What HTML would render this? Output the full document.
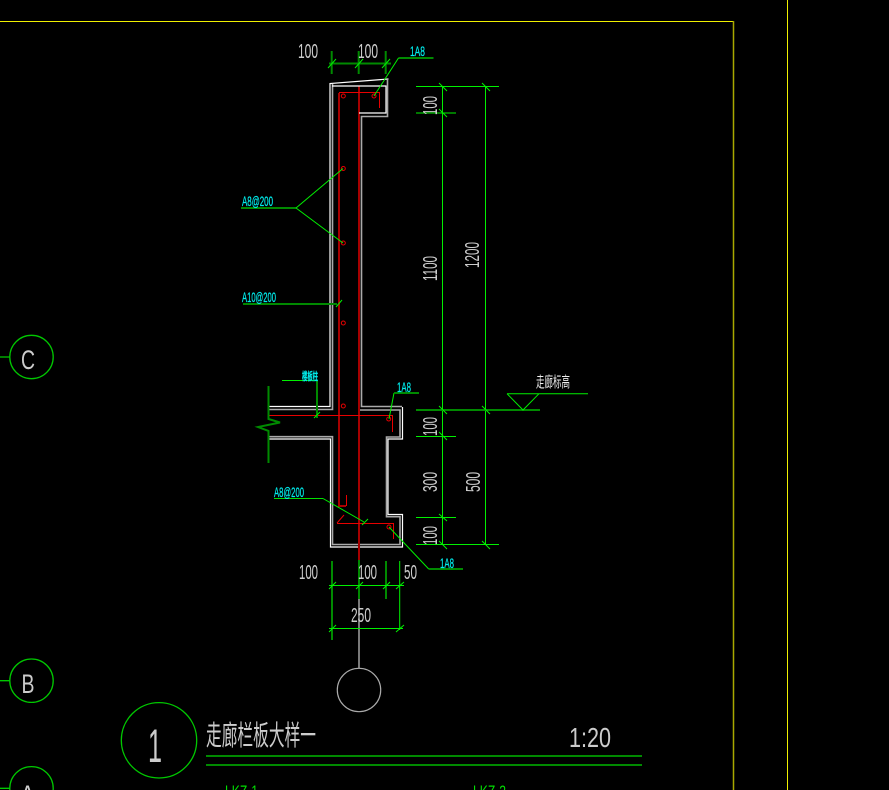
<!DOCTYPE html>
<html><head><meta charset="utf-8"><style>
html,body{margin:0;padding:0;background:#000;width:889px;height:790px;overflow:hidden}
svg{display:block}
text{font-family:"Liberation Sans","Noto Sans CJK SC",sans-serif}
.w{fill:#ccc}.c{fill:#0ee;stroke:#0ee;stroke-width:.25}.g{fill:#0d0}
.dk{stroke:#008a00;stroke-width:2;fill:none}
.br{stroke:#00e000;stroke-width:1;fill:none}
.t{stroke:#00f000;stroke-width:1;fill:none}
.wh{stroke:#fff;stroke-width:1.2;fill:none}
.gr{stroke:#aaa;stroke-width:1.6;fill:none}
.rd{stroke:#a80000;stroke-width:2;fill:none}
.rb{stroke:#e80000;stroke-width:1;fill:none}
.dot{stroke:#e80000;stroke-width:1;fill:none}
</style></head><body>
<svg width="889" height="790" viewBox="0 0 889 790" xmlns="http://www.w3.org/2000/svg">
<rect width="889" height="790" fill="#000"/>
<!-- frame -->
<path d="M0 21.5H733" stroke="#f0f000" stroke-width="1" fill="none"/>
<path d="M733.5 21V790" stroke="#a8a800" stroke-width="1.5" fill="none"/>
<path d="M787.5 0V790" stroke="#f0f000" stroke-width="1" fill="none"/>

<!-- axis bubbles -->
<g fill="none" stroke="#00c800" stroke-width="1.3">
<circle cx="31.5" cy="357" r="21.7"/><circle cx="31.5" cy="680.7" r="21.7"/><circle cx="31.5" cy="788.3" r="21.7"/>
<path d="M0 357H10M0 680.7H10M0 788.3H10"/>
</g>
<text class="w" x="21" y="369" font-size="27" textLength="14" lengthAdjust="spacingAndGlyphs">C</text>
<text class="w" x="21.500" y="693" font-size="27" textLength="13" lengthAdjust="spacingAndGlyphs">B</text>
<text class="w" x="20" y="804" font-size="27" textLength="15" lengthAdjust="spacingAndGlyphs">A</text>

<!-- rebar -->
<path class="rd" d="M339 93V506H346"/>
<path class="rb" d="M346.500 506V495"/>
<path class="rd" d="M359 86V560"/>
<path class="rb" d="M339 92.500H379.500V108M269 415.500H392.500V432M337 523.500H393.500V539M337 523L344 515"/>
<g class="dot">
<circle cx="343.300" cy="96" r="2"/><circle cx="374" cy="96" r="2"/><circle cx="343.300" cy="168.500" r="2"/><circle cx="343.300" cy="243" r="2"/><circle cx="343.300" cy="323" r="2"/><circle cx="343.300" cy="406" r="2"/><circle cx="388.700" cy="419" r="2"/><circle cx="389" cy="527" r="2"/>
</g>

<!-- concrete outline -->
<path class="gr" d="M332.500 84V409.500H269"/>
<path class="gr" d="M387.500 80V116.500H361.500V406.500H402"/>
<path class="gr" d="M269 436.700H332.500V544.500H400V516.700H386.500V437H400V410H360"/>
<path class="wh" d="M269 406.500H330V83.500L388.500 79"/>
<path class="wh" d="M332 86H386V113H359"/>
<path class="wh" d="M402.500 407V439H388V514.500H402.500V547H330.500V439H269"/>

<!-- centre line & symbol -->
<path d="M359 560V668" stroke="#999" stroke-width="1.6" fill="none"/>
<path class="rd" d="M359 540V562"/>
<circle cx="359" cy="690" r="21.700" fill="none" stroke="#aaa" stroke-width="1.200"/>

<!-- top dim -->
<path class="dk" d="M331.700 51V74M358.700 51V74M385.700 51V74M329 63.500H391"/>
<path class="t" d="M328 68L336 59M355 68L363 59M382 68L390 59"/>
<text class="w" x="298" y="58" font-size="20" textLength="20" lengthAdjust="spacingAndGlyphs">100</text>
<text class="w" x="358" y="58" font-size="20" textLength="20" lengthAdjust="spacingAndGlyphs">100</text>

<!-- leaders -->
<path class="t" d="M374 96L398.500 58"/><path class="dk" d="M398.500 58H433.500" stroke-width="1.500"/>
<text class="c" x="410" y="56" font-size="14" textLength="15" lengthAdjust="spacingAndGlyphs">1A8</text>
<path class="dk" d="M241 208H296" stroke-width="1.500"/>
<path class="t" d="M296 208L343 168.500M296 208L343 243"/>
<text class="c" x="242" y="206" font-size="14" textLength="31" lengthAdjust="spacingAndGlyphs">A8@200</text>
<path class="dk" d="M243 304H337"/>
<path class="t" d="M336 307L342 300"/>
<text class="c" x="242" y="302" font-size="14" textLength="34" lengthAdjust="spacingAndGlyphs">A10@200</text>

<!-- slab break / label -->
<path class="dk" d="M268.500 386V419L280 422.500L258 427L268.500 431V463" stroke-width="1.500"/>
<path class="t" d="M282 380.500H317"/><path class="dk" d="M317 380.500V418"/>
<path class="t" d="M314 418L320 412"/>
<text class="c" x="302" y="380" font-size="11" font-weight="bold" textLength="16" lengthAdjust="spacingAndGlyphs">楼板柱</text>
<path class="t" d="M389 419L394 393"/><path class="dk" d="M394 393H419"/>
<text class="c" x="397" y="392" font-size="14" textLength="14" lengthAdjust="spacingAndGlyphs">1A8</text>

<path class="br" d="M274 498.500H323"/><path class="t" d="M323 498.500L364 522M362 525L368 519"/>
<text class="c" x="274" y="497" font-size="14" textLength="30" lengthAdjust="spacingAndGlyphs">A8@200</text>
<path class="t" d="M389 527L428.700 569"/><path class="dk" d="M428.700 569H463" stroke-width="1.500"/>
<text class="c" x="440" y="568" font-size="14" textLength="14" lengthAdjust="spacingAndGlyphs">1A8</text>

<!-- right dim -->
<path class="t" d="M416 86.500H499M416 113H456M442.500 86V545M485.500 86V545M416 436.500H456M416 517.500H456M416 544.500H499"/>
<path class="dk" d="M416 410H540"/>
<path class="t" d="M439 83L447 91M482 83L490 91M439 109L447 117M439 406L447 414M482 406L490 414M439 432L447 440M439 514L447 521M439 541L447 549M482 541L490 549"/>
<path class="t" d="M507 393.700L523 410L539 393.700M507 393.700H588"/>
<text x="536" y="387" font-size="15" fill="#eee" textLength="34" lengthAdjust="spacingAndGlyphs">走廊标高</text>

<g class="w" font-size="20">
<text transform="translate(437,115) rotate(-90)" textLength="19" lengthAdjust="spacingAndGlyphs">100</text>
<text transform="translate(437,281) rotate(-90)" textLength="25" lengthAdjust="spacingAndGlyphs">1100</text>
<text transform="translate(479,268) rotate(-90)" textLength="26" lengthAdjust="spacingAndGlyphs">1200</text>
<text transform="translate(437,436) rotate(-90)" textLength="19" lengthAdjust="spacingAndGlyphs">100</text>
<text transform="translate(437,492) rotate(-90)" textLength="20" lengthAdjust="spacingAndGlyphs">300</text>
<text transform="translate(480,492) rotate(-90)" textLength="20" lengthAdjust="spacingAndGlyphs">500</text>
<text transform="translate(437,545) rotate(-90)" textLength="19" lengthAdjust="spacingAndGlyphs">100</text>
</g>

<!-- bottom dim -->
<path class="dk" d="M332 561V640M386 561V599"/>
<path class="dk" d="M359 560V599"/>
<path class="t" d="M399.700 561V630M329 585.500H404M329 628.500H403"/>
<path class="t" d="M329 589L336 582M356 589L363 582M383 589L390 582M396 589L404 582M329 632L336 625M396 632L404 625"/>
<text class="w" x="299" y="579" font-size="20" textLength="19" lengthAdjust="spacingAndGlyphs">100</text>
<text class="w" x="358" y="579" font-size="20" textLength="19" lengthAdjust="spacingAndGlyphs">100</text>
<text class="w" x="404" y="579" font-size="20" textLength="13" lengthAdjust="spacingAndGlyphs">50</text>
<text class="w" x="351" y="622" font-size="20" textLength="20" lengthAdjust="spacingAndGlyphs">250</text>

<!-- title -->
<circle cx="159" cy="740.300" r="37.700" fill="none" stroke="#00c800" stroke-width="1.300"/>
<text class="w" x="148" y="762" font-size="47" textLength="14" lengthAdjust="spacingAndGlyphs">1</text>
<text class="w" x="206" y="745" font-size="28" textLength="110" lengthAdjust="spacingAndGlyphs">走廊栏板大样一</text>
<path class="dk" d="M206 756H642M206 765H642"/>
<text class="w" x="569" y="747" font-size="28" textLength="42" lengthAdjust="spacingAndGlyphs">1:20</text>
<text class="g" x="225" y="797" font-size="17" textLength="33" lengthAdjust="spacingAndGlyphs">LKZ-1</text>
<text class="g" x="473" y="797" font-size="17" textLength="33" lengthAdjust="spacingAndGlyphs">LKZ-2</text>
</svg>
</body></html>
